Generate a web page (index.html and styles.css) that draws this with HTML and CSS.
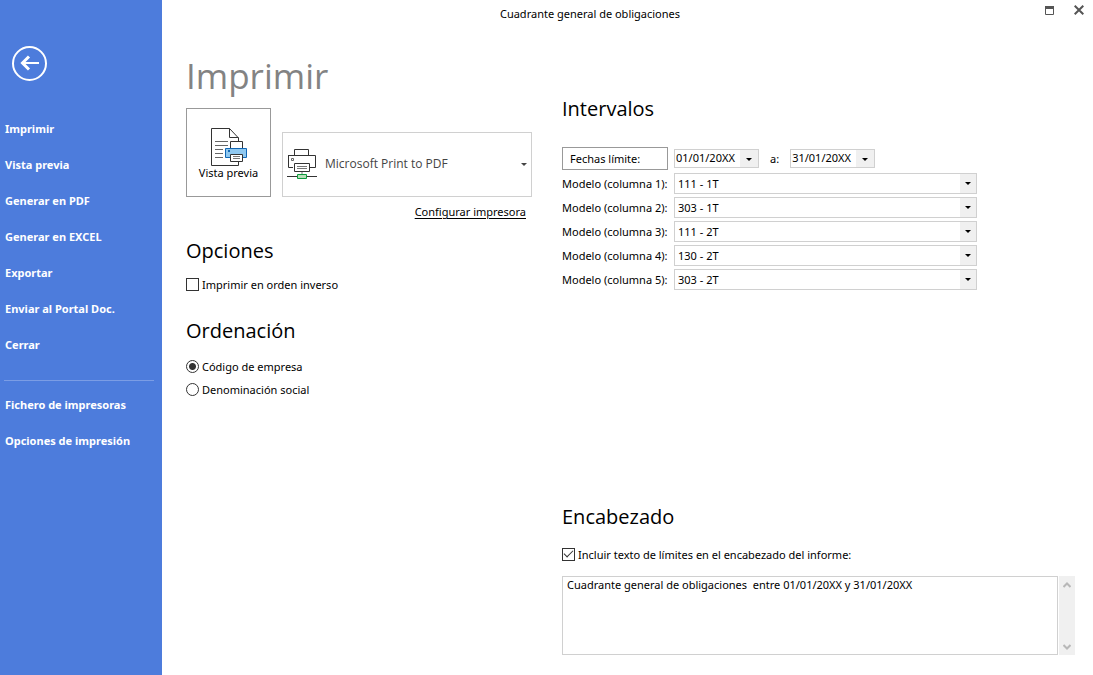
FILE: index.html
```html
<!DOCTYPE html>
<html lang="es">
<head>
<meta charset="utf-8">
<title>Cuadrante general de obligaciones</title>
<link rel="stylesheet" href="styles.css">
</head>
<body>
<div class="window">
  <aside class="sidebar">
    <button class="back" type="button" aria-label="Volver">
      <svg width="35" height="35" viewBox="0 0 35 35" fill="none" stroke="#fff"><circle cx="17.5" cy="17.5" r="16.5" stroke-width="2"/><path d="M27 17H11" stroke-width="2"/><path d="M17 10.500L10.500 17l6.500 6.500" stroke-width="3"/></svg>
    </button>
    <nav class="menu">
      <a href="#">Imprimir</a>
      <a href="#">Vista previa</a>
      <a href="#">Generar en PDF</a>
      <a href="#">Generar en EXCEL</a>
      <a href="#">Exportar</a>
      <a href="#">Enviar al Portal Doc.</a>
      <a href="#">Cerrar</a>
    </nav>
    <nav class="menu menu-extra">
      <a href="#">Fichero de impresoras</a>
      <a href="#">Opciones de impresión</a>
    </nav>
  </aside>
  <div class="page">
    <header class="titlebar">
      <span class="caption">Cuadrante general de obligaciones</span>
      <div class="window-buttons">
        <button type="button" aria-label="Maximizar"><svg width="9" height="9" viewBox="0 0 9 9"><path d="M.5 .5h8v8h-8z" fill="none" stroke="#555"/><path d="M0 0h9v3H0z" fill="#555"/></svg></button>
        <button type="button" aria-label="Cerrar ventana"><svg width="10" height="10" viewBox="0 0 10 10"><path d="M.7 .7l8.600 8.600M9.300 .7L.7 9.300" stroke="#555" stroke-width="2"/></svg></button>
      </div>
    </header>
    <main class="content">
      <section class="column">
        <h1>Imprimir</h1>
        <div class="print-row">
          <button class="preview" type="button">
            <svg width="36" height="39" viewBox="1 1 36 39" fill="none">
              <path d="M28.500 14V11L19.500 1.500H1.500v37h27z" fill="#fff" stroke="#333"/>
              <path d="M19.500 1.500v9h9" stroke="#333"/>
              <path d="M5 14.500h13M5 18.500h13M5 22.500h8M5 26.500h8M5 30.500h8" stroke="#666"/>
              <path d="M20.500 22v-7.500h12V22" fill="#fff" stroke="#333"/>
              <path d="M15.500 21.500h21v9h-21z" fill="#8fc8f0" stroke="#1167b5"/>
              <path d="M18 23h2v2h-2z" fill="#1167b5"/>
              <path d="M20.500 27.500h12v7h-12z" fill="#fff" stroke="#333"/>
              <path d="M23 29.500h7M23 31.500h7" stroke="#777"/>
            </svg>
            <span>Vista previa</span>
          </button>
          <div class="printer">
            <svg width="30" height="32" viewBox="0 0 30 32" fill="none">
              <path d="M7.500 7V1.500h14V7M6 19.500H1.500v-12h27v12H23" stroke="#333"/>
              <path d="M1 7.500h27" stroke="#333"/>
              <path d="M4.500 10.500h2v2h-2z" stroke="#666"/>
              <path d="M7.500 15.500h15v8h-15z" fill="#fff" stroke="#333"/>
              <path d="M10 18.500h10M10 20.500h10" stroke="#777"/>
              <path d="M15 24v3" stroke="#bbb" stroke-width="2"/>
              <path d="M0 28.500h30" stroke="#333"/>
              <path d="M10.500 26.500h9v4h-9z" fill="#b9dfba" stroke="#0c9b3c"/>
            </svg>
            <select aria-label="Impresora"><option>Microsoft Print to PDF</option></select>
          </div>
        </div>
        <a class="configure" href="#">Configurar impresora</a>
        <h2 class="options-title">Opciones</h2>
        <label class="choice"><input type="checkbox">Imprimir en orden inverso</label>
        <h2 class="order-title">Ordenación</h2>
        <div class="radios">
          <label class="choice"><input type="radio" name="orden" checked>Código de empresa</label>
          <label class="choice"><input type="radio" name="orden">Denominación social</label>
        </div>
      </section>
      <section class="column">
        <h2 class="ranges-title">Intervalos</h2>
        <div class="fields">
          <button class="limits" type="button">Fechas límite:</button>
          <div class="dates">
            <span class="combo date"><input type="text" aria-label="Fecha inicial" value="01/01/20XX"></span>
            <label for="fecha-final">a:</label>
            <span class="combo date"><input type="text" id="fecha-final" value="31/01/20XX"></span>
          </div>
          <label for="m1">Modelo (columna 1):</label>
          <span class="combo"><select id="m1"><option>111 - 1T</option></select></span>
          <label for="m2">Modelo (columna 2):</label>
          <span class="combo"><select id="m2"><option>303 - 1T</option></select></span>
          <label for="m3">Modelo (columna 3):</label>
          <span class="combo"><select id="m3"><option>111 - 2T</option></select></span>
          <label for="m4">Modelo (columna 4):</label>
          <span class="combo"><select id="m4"><option>130 - 2T</option></select></span>
          <label for="m5">Modelo (columna 5):</label>
          <span class="combo"><select id="m5"><option>303 - 2T</option></select></span>
        </div>
        <div class="heading-block">
          <h2>Encabezado</h2>
          <label class="choice"><input type="checkbox" checked>Incluir texto de límites en el encabezado del informe:</label>
          <div class="note">
            <textarea aria-label="Texto del encabezado">Cuadrante general de obligaciones  entre 01/01/20XX y 31/01/20XX</textarea>
            <div class="scroll">
              <button type="button" aria-label="Subir"><svg width="8" height="6" viewBox="0 0 8 6"><path d="M.5 5L4 1.500 7.500 5" fill="none" stroke="#b8b8b8" stroke-width="2"/></svg></button>
              <button type="button" aria-label="Bajar"><svg width="8" height="6" viewBox="0 0 8 6"><path d="M.5 1L4 4.500 7.500 1" fill="none" stroke="#b8b8b8" stroke-width="2"/></svg></button>
            </div>
          </div>
        </div>
      </section>
    </main>
  </div>
</div>
</body>
</html>
```
FILE: styles.css
```css
* { box-sizing: border-box; }

body {
  margin: 0;
  background: #fff;
  color: #000;
  font: 11px/16px "Noto Sans", "Open Sans", sans-serif;
}

button, input, select, textarea {
  margin: 0;
  padding: 0;
  border: 0;
  border-radius: 0;
  background: none;
  color: inherit;
  font: inherit;
}

svg { display: block; }

h1, h2 { margin: 0; font-weight: 400; }

h1 {
  padding-bottom: 2px;
  margin-top: 14px;
  color: #838383;
  font: 400 35px/60px "Open Sans", sans-serif;
}

h2 { font-family: "Open Sans", sans-serif; font-size: 20px; line-height: 28px; }

.window { display: flex; min-height: 100vh; }

.sidebar {
  flex: 0 0 162px;
  padding: 46px 8px 20px 4px;
  background: #4d7cdc;
  color: #fff;
}

.back { display: block; margin-left: 8px; }

.menu {
  display: flex;
  flex-direction: column;
  gap: 20px;
  padding: 40px 0 27px 1px;
}

.menu a {
  color: inherit;
  font-size: 11px;
  font-weight: 700;
  text-decoration: none;
}

.menu-extra { padding-top: 16px; border-top: 1px solid #7b9de5; }

.page { flex: 1; display: flex; flex-direction: column; min-width: 0; }

.titlebar { display: flex; align-items: center; height: 28px; }

.caption { flex: 1; text-align: center; }

.window-buttons {
  display: flex;
  align-items: center;
  justify-content: flex-end;
  gap: 20px;
  width: 75px;
  padding: 0 9px 8px 0;
}

.content {
  flex: 1;
  display: grid;
  grid-template-columns: 346px minmax(0, 1fr);
  gap: 30px;
  padding: 4px 18px 20px 24px;
}

.column { display: flex; flex-direction: column; }

.print-row { display: flex; align-items: flex-end; gap: 11px; }

.preview {
  display: flex;
  flex-direction: column;
  align-items: center;
  justify-content: flex-start;
  width: 85px;
  height: 89px;
  padding-top: 19px;
  border: 1px solid #999;
}

.preview span { line-height: 12px; }

.printer {
  position: relative;
  display: flex;
  flex: 1;
  height: 65px;
  border: 1px solid #d0d0d0;
}

.printer svg { position: absolute; left: 4px; top: 15px; pointer-events: none; }

.printer select {
  flex: 1;
  padding: 0 0 2px 42px;
  appearance: none;
  color: #444;
  font-family: "Open Sans", sans-serif;
  font-size: 12px;
}

.printer::after, .combo::after {
  content: "";
  position: absolute;
  border: 3px solid transparent;
  border-top-color: #000;
  border-bottom: 0;
  pointer-events: none;
}

.printer::after { right: 4px; top: 30px; border-top-color: #444; }

.configure {
  align-self: flex-end;
  margin: 7px 6px 0 0;
  color: inherit;
  text-underline-offset: 2px;
}

.options-title { margin-top: 17px; }
.order-title { margin-top: 24px; }
.ranges-title { margin-top: 63px; }

.choice { display: flex; align-items: flex-start; gap: 3px; }
.column > .choice { margin-top: 12px; }

.choice input {
  appearance: none;
  width: 13px;
  height: 13px;
  margin-top: 1px;
  border: 1px solid #333;
}

.choice input[type="radio"] { border-radius: 50%; }

.choice input[type="radio"]:checked {
  background: radial-gradient(circle, #333 3px, transparent 4px);
}

.choice input[type="checkbox"]:checked::before {
  content: "";
  display: block;
  width: 8px;
  height: 4px;
  margin: 1px;
  border: solid #333;
  border-width: 0 0 1px 1px;
  transform: rotate(-45deg);
}

.radios { display: flex; flex-direction: column; gap: 7px; margin-top: 14px; }

.fields {
  display: grid;
  grid-template-columns: 106px minmax(0, 303px);
  align-items: center;
  gap: 3px 6px;
  margin-top: 24px;
}

.fields > label { white-space: nowrap; }

.limits {
  height: 23px;
  padding-left: 7px;
  border: 1px solid #999;
  text-align: left;
}

.dates { display: flex; align-items: center; gap: 11px; }

.combo {
  position: relative;
  display: flex;
  height: 21px;
  border: 1px solid #d0d0d0;
}

.combo select, .combo input {
  flex: 1;
  min-width: 0;
  padding: 0 0 0 3px;
  appearance: none;
  background: linear-gradient(#f0f0f0, #f0f0f0) right / 16px 100% no-repeat;
}

.combo::after { right: 5px; top: 8px; }

.date { width: 85px; height: 19px; }
.combo.date input { padding: 0 0 1px 1px; background-size: 18px 100%; }
.date::after { right: 6px; top: 8px; }

.heading-block { margin-top: auto; }
.heading-block .choice { margin: 16px 0 13px; }

.note { display: flex; gap: 1px; height: 79px; }

.note textarea {
  flex: 1;
  padding: 0 4px;
  border: 1px solid #d0d0d0;
  resize: none;
}

.scroll {
  display: flex;
  flex-direction: column;
  justify-content: space-between;
  align-items: center;
  width: 16px;
  padding: 6px 0 5px;
  background: #f0f0f0;
}
```
